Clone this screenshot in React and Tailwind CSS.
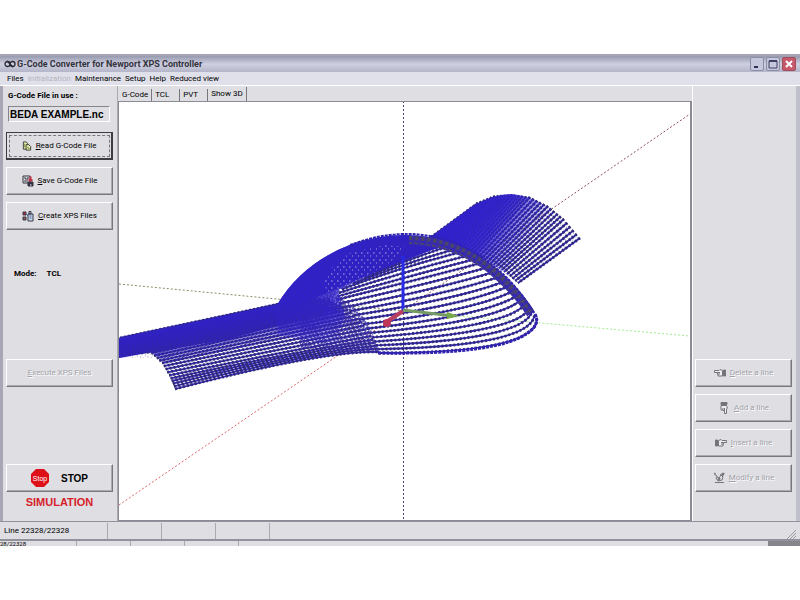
const menus = ['Files', 'Initialization', 'Maintenance', 'Setup', 'Help', 'Reduced view'];
const tabs = ['G-Code', 'TCL', 'PVT', 'Show 3D'];

const raised = 'border border-t-white border-l-white border-r-[#77777d] border-b-[#77777d] shadow-[inset_-1px_-1px_0_#aaaab0]';

// point on a polyline, t in 0..1, evenly split between its nodes
const along = (nodes, t) => {
  const pos = t * (nodes.length - 1);
  const i = Math.min(Math.floor(pos), nodes.length - 2);
  const f = pos - i;
  return [
    nodes[i][0] + (nodes[i + 1][0] - nodes[i][0]) * f,
    nodes[i][1] + (nodes[i + 1][1] - nodes[i][1]) * f,
  ];
};

// rows of tool positions between a start curve, a bend curve and an end curve
const rows = (start, bend, end, count) =>
  Array.from({ length: count }, (_, i) => {
    const t = i / (count - 1);
    const a = along(start, t);
    const c = along(bend, t);
    const b = along(end, t);
    return `M${a[0].toFixed(1)} ${a[1].toFixed(1)}Q${c[0].toFixed(1)} ${c[1].toFixed(1)} ${b[0].toFixed(1)} ${b[1].toFixed(1)}`;
  });

const middle = (start, end) => start.map((p, i) => [(p[0] + end[i][0]) / 2, (p[1] + end[i][1]) / 2]);

const wingTop = [[478, 203], [495, 196], [512, 195], [530, 197], [548, 206], [564, 219], [580, 238]];
const wingBase = [[430, 238], [446, 242], [461, 248], [476, 255], [491, 263], [504, 272], [518, 283]];
const tailTip = [[120, 338], [120, 347], [122, 355], [150, 352], [162, 363], [170, 377], [175, 389]];
const tailBase = [[279, 304], [310, 298], [330, 300], [346, 308], [362, 322], [372, 338], [379, 352]];
const tailBend = [[200, 321], [215, 323], [226, 328], [248, 330], [262, 342], [276, 355], [325, 350]];

const domeStart = [[376, 272], [340, 290], [336, 301], [352, 313], [366, 327], [374, 341], [379, 353]];
const domeBend = [[410, 256], [400, 268], [420, 281], [450, 297], [482, 314], [520, 331], [535, 353]];
const domeEnd = [[438, 245], [460, 253], [481, 265], [500, 280], [516, 294], [529, 307], [537, 319]];

const wingRows = rows(wingTop, middle(wingTop, wingBase), wingBase, 31);
const tailRows = rows(tailTip, tailBend, tailBase, 28);
const domeRows = rows(domeStart, domeBend, domeEnd, 20);

function Rows({ paths }) {
  return paths.map((d) => (
    <g key={d} fill="none">
      <path d={d} stroke="#3324b4" strokeWidth="1.8" />
      <path d={d} stroke="#2e2a74" strokeWidth="2.8" strokeDasharray="2 2" />
    </g>
  ));
}

function Plot() {
  return (
    <svg viewBox="119 102 571 418" preserveAspectRatio="none" className="block h-full w-full" role="img" aria-label="3D tool path">
      <defs>
        <pattern id="speckle" width="5" height="4" patternUnits="userSpaceOnUse" patternTransform="rotate(-18)">
          <path d="M0 1h1M3 3h1" stroke="#35336f" strokeOpacity=".6" />
        </pattern>
        <pattern id="gaps" width="6" height="7" patternUnits="userSpaceOnUse">
          <path d="M1 1h1.6M4 4h1" stroke="#a5a2df" />
        </pattern>
        <pattern id="mesh" width="4" height="4" patternUnits="userSpaceOnUse" patternTransform="rotate(-24)">
          <path d="M0 1h3M2 3h2" stroke="#35299f" strokeWidth="1.4" />
        </pattern>
        <linearGradient id="wingFade" x1="475" y1="210" x2="540" y2="255" gradientUnits="userSpaceOnUse">
          <stop offset="0" stopColor="#3020cf" />
          <stop offset=".3" stopColor="#3020cf" stopOpacity=".9" />
          <stop offset=".8" stopColor="#3020cf" stopOpacity="0" />
        </linearGradient>
        <linearGradient id="tailFade" x1="200" y1="323" x2="208" y2="362" gradientUnits="userSpaceOnUse">
          <stop offset="0" stopColor="#3020c8" />
          <stop offset=".35" stopColor="#3020c0" stopOpacity=".85" />
          <stop offset=".85" stopColor="#3020c0" stopOpacity="0" />
        </linearGradient>
        <radialGradient id="domeFade" cx="300" cy="275" r="82" gradientUnits="userSpaceOnUse">
          <stop offset="0" stopColor="#3020cb" />
          <stop offset=".45" stopColor="#3020cb" stopOpacity=".8" />
          <stop offset="1" stopColor="#3020cb" stopOpacity="0" />
        </radialGradient>
      </defs>

      {/* axes */}
      <g fill="none" strokeDasharray="2 2">
        <path d="M403.5 101V520" stroke="#45457c" />
        <path d="M119 505L403 311" stroke="#e0646c" />
        <path d="M403 311L690 114" stroke="#8d4f59" />
        <path d="M119 284L403 311" stroke="#849064" />
        <path d="M403 311L690 336" stroke="#a5eb94" />
      </g>

      {/* right wing */}
      <Rows paths={wingRows} />
      <path d="M430 238L470 208Q492 194 512 194Q550 198 580 238L518 283Q480 250 430 238Z" fill="url(#wingFade)" />
      <path d="M430 238L470 208Q492 194 512 194Q550 198 580 238L518 283Q480 250 430 238Z" fill="url(#speckle)" />

      {/* left wing */}
      <path d="M119 338L279 304L300 320L225 340L153 352L119 358Z" fill="#3020bc" />
      <Rows paths={tailRows} />
      <path d="M119 338L279 304Q350 294 379 352L335 353L175 389Q168 361 150 352L119 358Z" fill="url(#tailFade)" />
      <path d="M119 338L279 304L335 300L300 336L153 358L119 358Z" fill="url(#speckle)" />

      {/* dome */}
      <Rows paths={domeRows} />
      <path d="M300 300L338 296Q370 312 379 353L350 351L300 348Z" fill="url(#mesh)" />
      <path d="M277 305Q302 263 352 244Q406 226 455 244L432 250L385 270L342 289Q320 308 318 328L279 330Z" fill="url(#mesh)" />
      <path d="M277 305Q302 263 352 244Q406 226 455 244L432 250L385 268L336 289L300 304Z" fill="#3020c6" />
      <path d="M277 305Q302 263 352 244Q406 226 455 244L432 250L385 268L338 290L345 315L335 345L277 335Z" fill="url(#domeFade)" />
      <path d="M277 305Q302 263 352 244Q406 226 455 244L432 250L385 268L336 289L320 318L285 328Z" fill="url(#speckle)" />
      <path d="M336 262L352 252L385 245L406 247L388 264L358 280L328 292L322 282Z" fill="url(#gaps)" />
      <path d="M409 240Q453 241 488 267Q517 291 531 314" fill="none" stroke="#3b2fa8" strokeWidth="9" />
      <path d="M409 240Q453 241 488 267Q517 291 530 312" fill="none" stroke="#4a4668" strokeWidth="8" strokeDasharray="3 3" />
      <path d="M409 241Q453 242 486 268Q514 292 528 313" fill="none" stroke="#3426bb" strokeWidth="2" strokeDasharray="4 2" />
      <path d="M350 245Q405 224 455 243Q507 265 537 318" fill="none" stroke="#2f24ae" strokeWidth="2" strokeDasharray="3 1" />
      <path d="M378 353Q500 355 529 332Q540 324 535 314" fill="none" stroke="#3022ae" strokeWidth="3" strokeDasharray="3 1" />

      {/* origin marker */}
      <path d="M403 311V256" stroke="#2929e8" strokeWidth="3" />
      <path d="M403 311L388 321" stroke="#b83c60" strokeWidth="4" />
      <circle cx="387" cy="323" r="4" fill="#bd3658" />
      <path d="M403 310L453 316" stroke="#749b63" strokeWidth="3" />
      <path d="M447 312L459 316L447 319Z" fill="#76a849" />
    </svg>
  );
}

function WindowButton({ label, close, children }) {
  return (
    <button
      aria-label={label}
      className={`flex h-3.5 w-3.5 items-center justify-center rounded-xs border ${close ? 'border-[#a44c59] bg-[#c5586a]' : 'border-[#8b8da5] bg-[#c5c7dc]'}`}
    >
      <svg viewBox="0 0 12 12" className="h-3 w-3" fill="none">{children}</svg>
    </button>
  );
}

function ReadIcon() {
  return (
    <svg viewBox="0 0 10 11" className="h-2.5 w-2.5" fill="none" stroke="#33382c">
      <path d="M1 1h3l2 2v6H1z" fill="#e9efb5" />
      <path d="M4 4h3l2 2v4H4z" fill="#e9efb5" />
      <path d="M2.5 3v4M6 6v2h2" stroke="#758c2f" />
    </svg>
  );
}

function SaveIcon() {
  return (
    <svg viewBox="0 0 12 12" className="h-3 w-3" fill="none" stroke="#32323c">
      <path d="M1 1h7v7H1z" fill="#e5e5ed" />
      <path d="M3 2v2h3V2M2 6h4" />
      <path d="M6 7h5v4H6z" fill="#33334b" />
      <path d="M8.5 1.5v5M6.5 5h4" stroke="#c32e42" strokeWidth="2" />
      <path d="M8 10h1.5" stroke="#fff" />
    </svg>
  );
}

function CreateIcon() {
  return (
    <svg viewBox="0 0 12 12" className="h-3 w-3" fill="none" stroke="#353a4b">
      <path d="M1 2h3v3H1z" fill="#b8283a" />
      <path d="M1 7h3v3H1z" fill="#9e5841" />
      <path d="M6 4h5v7H6zM7 1.5h2V4H7z" fill="#cfddef" />
      <path d="M7.5 6h2M7.5 8h2M4 4l2 2" stroke="#435c96" />
    </svg>
  );
}

function HandIcon({ className }) {
  return (
    <svg viewBox="0 0 12 10" className={`h-2.5 w-3 ${className}`} fill="none" stroke="#74747b">
      <path d="M3.5 2.5L6 1.5l1 1h4.500v2H8.500V6H8v2H3.500z" fill="#eee" />
      <path d="M6 4.500h2.500M6 6h2" />
      <path d="M.5 2h2v6h-2z" fill="#74747b" />
    </svg>
  );
}

function EditIcon() {
  return (
    <svg viewBox="0 0 12 12" className="h-3 w-3" fill="none" stroke="#74747b">
      <path d="M1 2l3 2-1 2 2 3 4-1 1-3-2-2-2 3-2-1M7 3l3-2M2 10.5h9M1 1l2 1" />
      <path d="M9 4l2-3M5 8l2-2" strokeWidth="2" />
    </svg>
  );
}

function SideButton({ icon, label, disabled, focused }) {
  const frame = focused
    ? 'border-[#3c3c42] border border-r-2 border-b-2 outline outline-1 outline-dashed outline-[#77777d] -outline-offset-4'
    : raised;
  return (
    <button
      disabled={disabled}
      className={`flex h-7 w-full items-center justify-center gap-1 bg-[#dedee3] font-['Roboto',sans-serif] text-[8px] leading-3 ${frame} ${disabled ? 'text-[#a2a2a8] [text-shadow:1px_1px_0_white]' : 'text-black'}`}
    >
      {icon}
      <span><u>{label[0]}</u>{label.slice(1)}</span>
    </button>
  );
}

function App() {
  return (
    <div className="min-h-screen bg-white py-[54px] font-['Roboto',sans-serif] text-black">
      <div className="flex h-[calc(100vh-108px)] min-h-[480px] flex-col bg-[#dedee3]">
        <header className="flex h-[18px] shrink-0 items-center justify-between border-t-2 border-[#a4a4b5] bg-linear-to-b from-[#9799ae] via-[#cecfe0] to-[#b4b5c8] pr-1 pl-1">
          <h1 className="flex items-center gap-px text-[9px] leading-3 font-bold text-[#33333d]">
            <svg viewBox="0 0 12 10" className="h-3 w-3" fill="none" stroke="#292933" strokeWidth="1.3">
              <circle cx="3.5" cy="5" r="2.5" /><circle cx="8.5" cy="5" r="2.5" /><path d="M3 2l6 6" />
            </svg>
            G-Code Converter for Newport XPS Controller
          </h1>
          <div className="flex gap-0.5">
            <WindowButton label="Minimize"><path d="M3 9h4" stroke="#303052" strokeWidth="2" /></WindowButton>
            <WindowButton label="Maximize"><path d="M2 3h8v7H2z" stroke="#404062" /><path d="M2 3h8" stroke="#404062" strokeWidth="2" /></WindowButton>
            <WindowButton label="Close" close><path d="M3 3l6 6M9 3L3 9" stroke="white" strokeWidth="2" /></WindowButton>
          </div>
        </header>

        <nav className="flex h-3.5 shrink-0 items-center gap-1 border-b border-white bg-[#e0e0eb] pl-[7px] text-[8px] leading-3">
          {menus.map((menu) => (
            <button key={menu} disabled={menu === 'Initialization'} className="disabled:text-[#b5b5bd]">{menu}</button>
          ))}
        </nav>

        <div className="flex min-h-0 flex-1 border-r-4 border-l-3 border-r-[#c0c0cd] border-l-[#a6a6b5]">
          <aside className="flex w-[115px] shrink-0 flex-col border-r border-[#aaaab0] pr-1 pl-[3px]">
            <label htmlFor="file" className="mt-1 pl-0.5 text-[8px] leading-3 font-bold">G-Code File in use :</label>
            <input id="file" readOnly value="BEDA EXAMPLE.nc" className="mt-1 ml-0.5 h-4 w-[102px] border border-t-[#85858b] border-l-[#85858b] border-r-white border-b-white px-px font-['Liberation_Sans',sans-serif] text-[10px] leading-3 font-bold" />
            <div className="mt-2.5 flex flex-col gap-[7px]">
              <SideButton label="Read G-Code File" icon={<ReadIcon />} focused />
              <SideButton label="Save G-Code File" icon={<SaveIcon />} />
              <SideButton label="Create XPS Files" icon={<CreateIcon />} />
            </div>
            <p className="mt-[38px] flex gap-2.5 pl-2 text-[8px] leading-3 font-bold"><span>Mode:</span><span>TCL</span></p>
            <div className="mt-auto"><SideButton label="Execute XPS Files" disabled /></div>
            <button className={`mt-[77px] flex h-7 shrink-0 items-center justify-center gap-3 font-['Liberation_Sans',sans-serif] text-[10px] font-bold ${raised}`}>
              <svg viewBox="0 0 18 18" className="h-[18px] w-[18px]">
                <path d="M5 0h8l5 5v8l-5 5H5l-5-5V5z" fill="#de1018" />
                <text x="9" y="12" textAnchor="middle" fontSize="7" fontWeight="400" fill="white">Stop</text>
              </svg>
              STOP
            </button>
            <p className="mt-0.5 mb-[11px] text-center font-['Liberation_Sans',sans-serif] text-[11px] leading-4 font-bold text-[#d71f2a]">SIMULATION</p>
          </aside>

          <main className="flex min-w-0 flex-1 flex-col">
            <div role="tablist" className="flex h-[15px] shrink-0 items-end pl-px text-[8px] leading-3">
              {tabs.map((tab) => (
                <button key={tab} role="tab" aria-selected={tab === 'Show 3D'} className="h-3 min-w-7 border-r border-[#77777d] px-[3px] text-left aria-selected:h-3.5">{tab}</button>
              ))}
            </div>
            <div className="min-h-0 flex-1 border border-r-2 border-[#8b8b95] bg-white"><Plot /></div>
          </main>

          <aside className="flex w-[104px] shrink-0 flex-col gap-[7px] border-l border-white pt-[273px] pr-1 pl-0.5">
            <SideButton label="Delete a line" disabled icon={<HandIcon className="-scale-x-100" />} />
            <SideButton label="Add a line" disabled icon={<HandIcon className="rotate-90" />} />
            <SideButton label="Insert a line" disabled icon={<HandIcon />} />
            <SideButton label="Modify a line" disabled icon={<EditIcon />} />
          </aside>
        </div>

        <footer className="flex h-[18px] shrink-0 items-end border-t border-[#92929c] text-[8px] leading-4">
          <span className="h-4 w-[108px] border-r border-[#aaaab0] pl-1">Line 22328/22328</span>
          <span className="h-4 w-[54px] border-r border-[#aaaab0]" />
          <span className="h-4 w-[54px] border-r border-[#aaaab0]" />
          <span className="h-4 w-[54px] border-r border-[#aaaab0]" />
          <svg viewBox="0 0 10 10" className="mr-1 ml-auto h-2.5 w-2.5" stroke="#9a9aa3">
            <path d="M1 10l9-9M4 10l6-6M7 10l3-3" />
          </svg>
        </footer>
        {/* strip of the window behind */}
        <div className="flex h-[7px] shrink-0 border-t-2 border-[#92929c] text-[6px] leading-[5px]">
          <span className="w-[77px] border-r border-[#aaaab0]">28/22328</span>
          <span className="w-[54px] border-r border-[#aaaab0]" />
          <span className="w-[54px] border-r border-[#aaaab0]" />
          <span className="w-[54px] border-r border-[#aaaab0]" />
          <span className="ml-auto w-8 bg-[#85858b]" />
        </div>
      </div>
    </div>
  );
}

export default App;
